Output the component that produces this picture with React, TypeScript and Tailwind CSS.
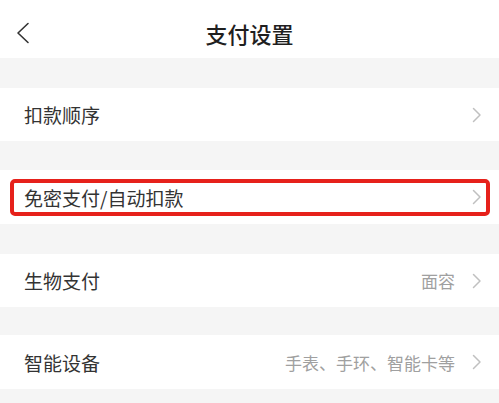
import React from 'react';

const font = { fontFamily: '"Noto Sans CJK SC", "Noto Sans", sans-serif' };

const Chevron: React.FC = () => (
  <svg width="10" height="16" viewBox="0 0 10 16" fill="none" className="shrink-0">
    <path d="M1.5 1.5L8 8L1.5 14.5" stroke="#c0c0c0" strokeWidth="1.5" strokeLinecap="round" strokeLinejoin="round" />
  </svg>
);

interface RowProps {
  label: string;
  hint?: string;
  height: string;
  highlight?: boolean;
}

const Row: React.FC<RowProps> = ({ label, hint, height, highlight }) => (
  <div className={`relative flex items-center bg-white pl-6 pr-[17px] ${height}`}>
    <span className="flex-1 text-[19px] text-[#333] leading-none">{label}</span>
    {hint && <span className="mr-[17px] text-[17px] text-[#a0a0a0] leading-none">{hint}</span>}
    <Chevron />
    {highlight && (
      <div className="absolute left-[10px] right-[9px] top-[9px] bottom-[8px] rounded-[5px] border-[4px] border-[#e6211b]" />
    )}
  </div>
);

export default function App() {
  return (
    <div className="w-[499px] h-[403px] overflow-hidden bg-[#f5f5f5]" style={font}>
      {/* Header */}
      <div className="relative flex h-[58px] items-center justify-center bg-white">
        <svg width="14" height="22" viewBox="0 0 14 22" fill="none" className="absolute left-[16px] top-[22px]">
          <path d="M12 1.5L2 11L12 20.5" stroke="#333" strokeWidth="1.6" strokeLinecap="round" strokeLinejoin="round" />
        </svg>
        <span className="text-[22px] font-medium text-[#1f1f1f] leading-none mt-[8px]">支付设置</span>
      </div>

      <div className="h-[30px]" />
      <Row label="扣款顺序" height="h-[53px]" />
      <div className="h-[29px]" />
      <Row label="免密支付/自动扣款" height="h-[54px]" highlight />
      <div className="h-[30px]" />
      <Row label="生物支付" hint="面容" height="h-[53px]" />
      <div className="h-[28px]" />
      <Row label="智能设备" hint="手表、手环、智能卡等" height="h-[54px]" />
    </div>
  );
}
